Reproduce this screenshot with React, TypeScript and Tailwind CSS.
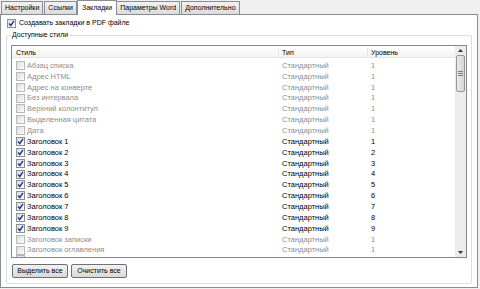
import React from 'react';

const TABS = ['Настройки', 'Ссылки', 'Закладки', 'Параметры Word', 'Дополнительно'];

const ROWS: { name: string; level: number; on: boolean }[] = [
  { name: 'Абзац списка', level: 1, on: false },
  { name: 'Адрес HTML', level: 1, on: false },
  { name: 'Адрес на конверте', level: 1, on: false },
  { name: 'Без интервала', level: 1, on: false },
  { name: 'Верхний колонтитул', level: 1, on: false },
  { name: 'Выделенная цитата', level: 1, on: false },
  { name: 'Дата', level: 1, on: false },
  { name: 'Заголовок 1', level: 1, on: true },
  { name: 'Заголовок 2', level: 2, on: true },
  { name: 'Заголовок 3', level: 3, on: true },
  { name: 'Заголовок 4', level: 4, on: true },
  { name: 'Заголовок 5', level: 5, on: true },
  { name: 'Заголовок 6', level: 6, on: true },
  { name: 'Заголовок 7', level: 7, on: true },
  { name: 'Заголовок 8', level: 8, on: true },
  { name: 'Заголовок 9', level: 9, on: true },
  { name: 'Заголовок записки', level: 1, on: false },
  { name: 'Заголовок оглавления', level: 1, on: false },
];

function Check({ on, dim }: { on: boolean; dim?: boolean }) {
  return (
    <span
      className={`flex h-[9px] w-[9px] shrink-0 items-center justify-center border bg-gradient-to-br from-[#dcdcdc] to-white ${
        dim ? 'border-[#b8b8b8]' : 'border-[#8e8f8f]'
      }`}
    >
      {on && (
        <svg width="7" height="7" viewBox="0 0 7 7">
          <path d="M1 3.5 L2.8 5.5 L6 0.8" fill="none" stroke="#1c3d8c" strokeWidth="1.4" />
        </svg>
      )}
    </span>
  );
}

function Btn({ label }: { label: string }) {
  return (
    <button className="flex h-[14px] w-[56px] items-center justify-center rounded-[2px] border border-[#707070] bg-gradient-to-b from-[#f2f2f2] to-[#d9d9d9] text-[7px] text-black">
      {label}
    </button>
  );
}

export default function App() {
  return (
    <div
      className="flex h-[289px] w-[480px] flex-col bg-[#f0f0f0] text-[7.5px] text-black"
      style={{ fontFamily: '"Liberation Sans", Arial, sans-serif' }}
    >
      <div className="relative z-10 flex h-[14px] items-end pl-[1px] text-[7px]">
        {TABS.map(t =>
          t === 'Закладки' ? (
            <div
              key={t}
              className="-mb-[1px] -mx-[1px] flex h-[15px] items-center border border-b-0 border-[#898c95] bg-white px-[4px]"
            >
              {t}
            </div>
          ) : (
            <div
              key={t}
              className="mr-[1px] flex h-[13px] items-center border border-b-0 border-[#898c95] bg-gradient-to-b from-[#f2f2f2] to-[#dcdcdc] px-[3px]"
            >
              {t}
            </div>
          ),
        )}
      </div>
      <div className="mr-[2px] mb-[3px] flex flex-1 flex-col border border-[#898c95] bg-white px-[5px] pt-[3px] pb-[3px]">
        <label className="flex h-[10px] items-center gap-[3px] pl-[1px] text-[7px]">
          <Check on />
          <span>Создавать закладки в PDF файле</span>
        </label>
        <div className="relative mt-[7px] flex flex-1 flex-col rounded-[2px] border border-[#d5dfe5] px-[4px] pt-[9px] pb-[5px]">
          <span className="absolute -top-[6px] left-[4px] bg-white px-[1px] text-[7px]">Доступные стили</span>
          <div className="flex h-[213px] border border-[#828790] bg-white">
            <div className="flex flex-1 flex-col overflow-hidden">
              <div className="flex h-[12px] shrink-0 items-center border-b border-[#e5e5e5] bg-gradient-to-b from-white to-[#f4f4f4] pt-[3px] text-[7px]">
                <div className="w-[267px] border-r border-[#e5e5e5] pl-[4px]">Стиль</div>
                <div className="w-[89px] border-r border-[#e5e5e5] pl-[3px]">Тип</div>
                <div className="pl-[3px]">Уровень</div>
              </div>
              <div className="flex flex-col pt-[2px]">
                {ROWS.map(r => (
                  <div
                    key={r.name}
                    className={`flex h-[10.87px] shrink-0 items-center ${
                      r.on ? 'text-black' : 'text-[#8d8d8d]'
                    }`}
                  >
                    <div className="flex w-[267px] items-center gap-[2px] pl-[4px]">
                      <Check on={r.on} dim={!r.on} />
                      <span>{r.name}</span>
                    </div>
                    <div className="w-[89px] pl-[3px]">Стандартный</div>
                    <div className="pl-[3px]">{r.level}</div>
                  </div>
                ))}
                <div className="flex h-[4px] shrink-0 items-start overflow-hidden">
                  <div className="flex w-[267px] items-start gap-[2px] pl-[4px]">
                    <span className="h-[4px] w-[9px] border border-b-0 border-[#b8b8b8] bg-[#e6e6e6]" />
                  </div>
                </div>
              </div>
            </div>
            <div className="flex w-[11px] flex-col bg-[#ececec] px-[1px]">
              <div className="flex h-[9px] items-center justify-center">
                <svg width="5" height="3" viewBox="0 0 5 3">
                  <path d="M0 3 L2.5 0 L5 3Z" fill="#333" />
                </svg>
              </div>
              <div className="flex h-[37px] items-center justify-center rounded-[2px] border border-[#979797] bg-gradient-to-r from-[#eaeaea] to-[#d6d6d6]">
                <svg width="5" height="5" viewBox="0 0 5 5">
                  <path d="M0 0.5H5M0 2.5H5M0 4.5H5" stroke="#7a7a7a" strokeWidth="1" />
                </svg>
              </div>
              <div className="flex-1" />
              <div className="flex h-[9px] items-center justify-center">
                <svg width="5" height="3" viewBox="0 0 5 3">
                  <path d="M0 0 L2.5 3 L5 0Z" fill="#333" />
                </svg>
              </div>
            </div>
          </div>
          <div className="mt-[6px] ml-[1px] flex gap-[3px]">
            <Btn label="Выделить все" />
            <Btn label="Очистить все" />
          </div>
        </div>
      </div>
    </div>
  );
}
